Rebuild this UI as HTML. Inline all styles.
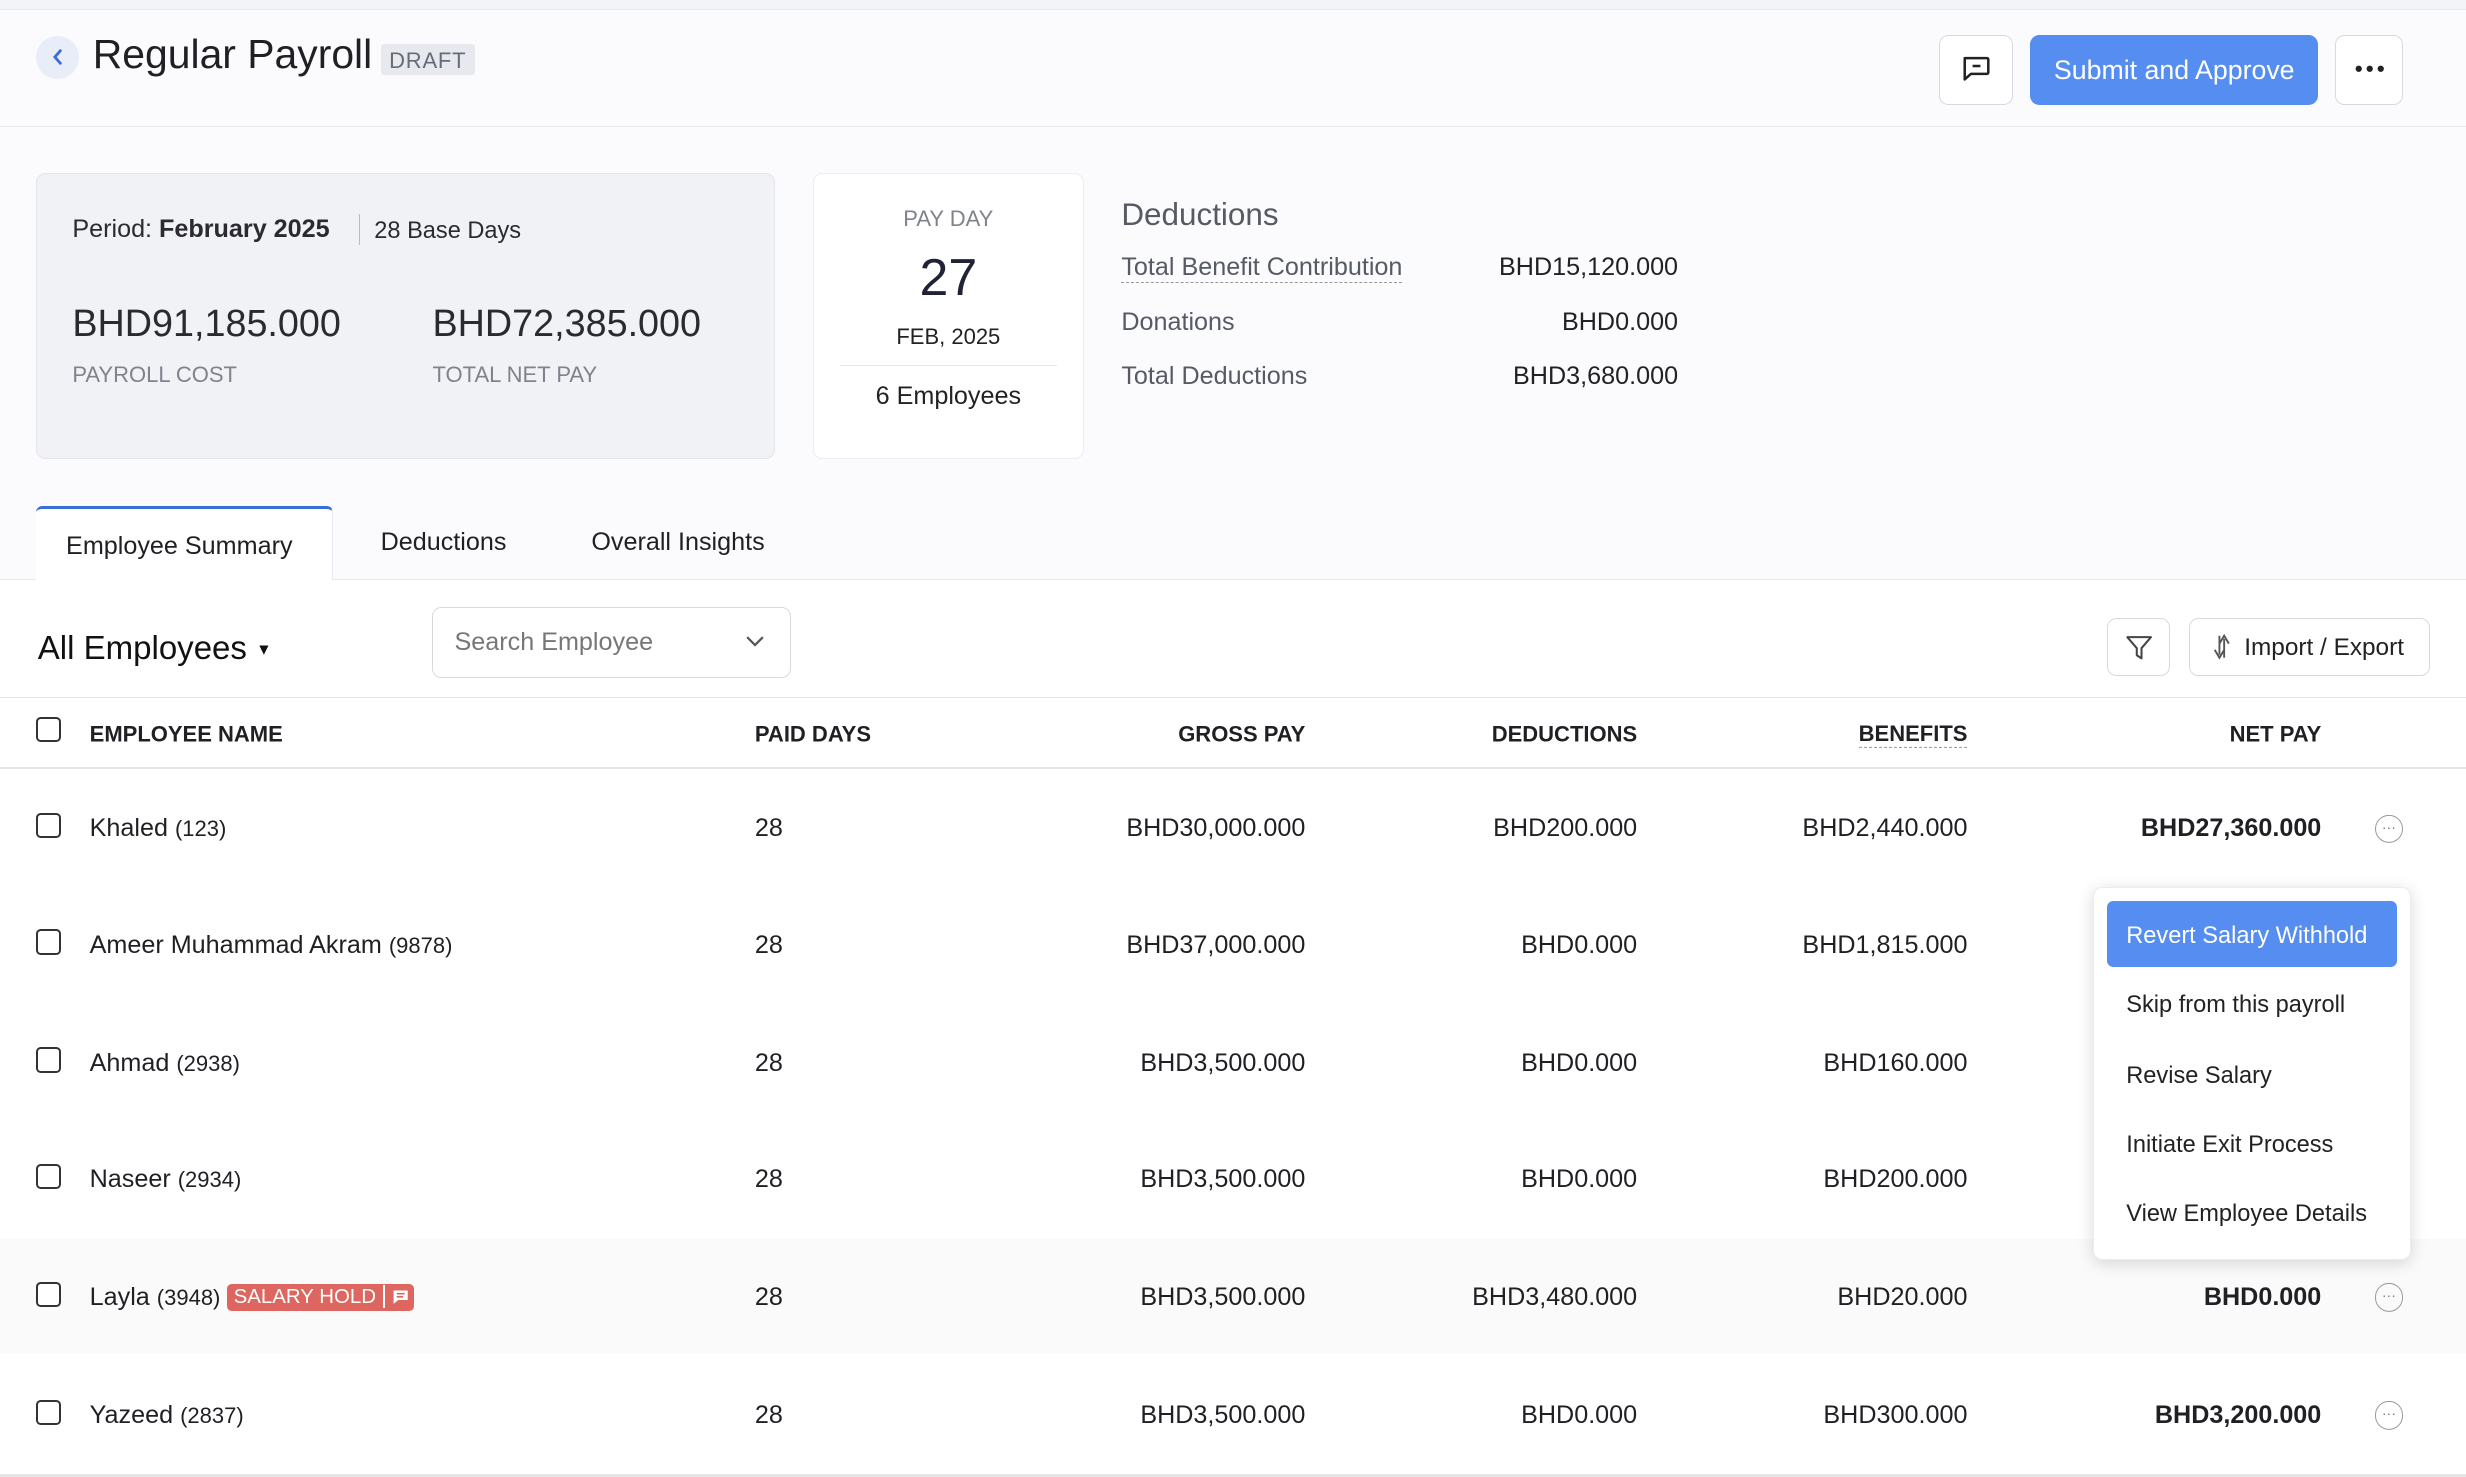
<!DOCTYPE html>
<html><head><meta charset="utf-8"><style>
html,body{margin:0;padding:0;background:#fff;}
body{width:1568px;height:939px;zoom:1.5727;position:relative;overflow:hidden;font-family:"Liberation Sans",Arial,sans-serif;color:#1f1f24;}
.a{position:absolute;white-space:nowrap;}
.r{text-align:right;}
.btn{position:absolute;border:1px solid #d8d9de;border-radius:6px;background:#fff;box-sizing:border-box;}
.cb{position:absolute;left:23px;width:16px;height:16px;border:1.3px solid #333;border-radius:3px;box-sizing:border-box;background:#fff;}
.cell{position:absolute;font-size:16px;transform:translateY(-45%);white-space:nowrap;}
.dot{position:absolute;left:1510px;width:18px;height:18px;border:1px solid #999;border-radius:50%;box-sizing:border-box;transform:translateY(-50%);font-size:9px;color:#777;text-align:center;line-height:14px;}
</style></head><body>
<div class="a" style="left:0;top:0;width:1568px;height:6px;background:#f3f4f8;border-bottom:1px solid #e8e9ee"></div>
<div class="a" style="left:0;top:7px;width:1568px;height:361px;background:#fbfbfe"></div>
<div class="a" style="left:0;top:80px;width:1568px;height:1px;background:#e8e9ee"></div>
<div class="a" style="left:23px;top:23px;width:27px;height:27px;border-radius:50%;background:#e8edf8"></div>
<svg class="a" style="left:30px;top:29px" width="14" height="14" viewBox="0 0 14 14"><path d="M8.5 3 L5 7 L8.5 11" stroke="#3a6fd8" stroke-width="1.8" fill="none" stroke-linecap="round"/></svg>
<div class="a" style="left:59px;top:20px;font-size:26px;color:#1f1f24">Regular Payroll</div>
<div class="a" style="left:242px;top:28px;width:60px;height:20px;background:#e8e9ee;border-radius:2px;font-size:14px;color:#666d78;text-align:center;line-height:21px;letter-spacing:0.5px">DRAFT</div>
<div class="btn" style="left:1233px;top:22px;width:47px;height:45px"></div>
<svg class="a" style="left:1246px;top:35px" width="20" height="18" viewBox="0 0 20 18"><path d="M3 2 H17 Q18 2 18 3 V11 Q18 12 17 12 H7 L3 15.5 V3 Q3 2 4 2 Z" fill="none" stroke="#222" stroke-width="1.6" stroke-linejoin="round"/><path d="M8 7 H13" stroke="#222" stroke-width="1.6"/></svg>
<div class="a" style="left:1291px;top:22px;width:183px;height:45px;background:#558df0;border-radius:6px;color:#fff;font-size:17px;text-align:center;line-height:45px">Submit and Approve</div>
<div class="btn" style="left:1485px;top:22px;width:43px;height:45px"></div>
<svg class="a" style="left:1497px;top:41px" width="20" height="6"><circle cx="3" cy="3" r="2" fill="#222"/><circle cx="10" cy="3" r="2" fill="#222"/><circle cx="17" cy="3" r="2" fill="#222"/></svg>

<div class="a" style="left:23px;top:110px;width:470px;height:182px;background:#f1f2f6;border:1px solid #e4e5ea;border-radius:6px;box-sizing:border-box"></div>
<div class="a" style="left:46px;top:137px;font-size:16px;color:#2a2a30">Period: <span style="font-weight:bold;color:#2a2a30">February 2025</span></div>
<div class="a" style="left:228px;top:136px;width:1px;height:20px;background:#bbb"></div>
<div class="a" style="left:238px;top:138px;font-size:15px;color:#2a2a30">28 Base Days</div>
<div class="a" style="left:46px;top:192px;font-size:24px;color:#2a2a30">BHD91,185.000</div>
<div class="a" style="left:275px;top:192px;font-size:24px;color:#2a2a30">BHD72,385.000</div>
<div class="a" style="left:46px;top:230px;font-size:14px;color:#80838c">PAYROLL COST</div>
<div class="a" style="left:275px;top:230px;font-size:14px;color:#80838c">TOTAL NET PAY</div>

<div class="a" style="left:517px;top:110px;width:172px;height:182px;background:#fff;border:1px solid #ebecef;border-radius:6px;box-sizing:border-box"></div>
<div class="a" style="left:517px;width:172px;top:131px;text-align:center;font-size:14px;color:#80838c">PAY DAY</div>
<div class="a" style="left:517px;width:172px;top:157px;text-align:center;font-size:33px;color:#202336">27</div>
<div class="a" style="left:517px;width:172px;top:206px;text-align:center;font-size:14px;color:#222">FEB, 2025</div>
<div class="a" style="left:534px;top:232px;width:138px;height:1px;background:#e6e6e6"></div>
<div class="a" style="left:517px;width:172px;top:243px;text-align:center;font-size:16px;color:#222">6 Employees</div>

<div class="a" style="left:713px;top:125px;font-size:20px;color:#555a64">Deductions</div>
<div class="a" style="left:713px;top:161px;font-size:16px;color:#555a64;border-bottom:1px dashed #999">Total Benefit Contribution</div>
<div class="a" style="left:713px;top:196px;font-size:16px;color:#555a64">Donations</div>
<div class="a" style="left:713px;top:230px;font-size:16px;color:#555a64">Total Deductions</div>
<div class="a r" style="left:900px;width:167px;top:161px;font-size:16px;color:#222">BHD15,120.000</div>
<div class="a r" style="left:900px;width:167px;top:196px;font-size:16px;color:#222">BHD0.000</div>
<div class="a r" style="left:900px;width:167px;top:230px;font-size:16px;color:#222">BHD3,680.000</div>

<div class="a" style="left:0;top:368px;width:1568px;height:1px;background:#e8e9ee"></div>
<div class="a" style="left:23px;top:322px;width:189px;height:47px;background:#fff;border-top:2px solid #3a6fd8;border-right:1px solid #e8e9ee;box-sizing:border-box;border-radius:4px 4px 0 0"></div>
<div class="a" style="left:42px;top:338px;font-size:16px;color:#1f1f24">Employee Summary</div>
<div class="a" style="left:242px;top:336px;font-size:16px;color:#1f1f24">Deductions</div>
<div class="a" style="left:376px;top:336px;font-size:16px;color:#1f1f24">Overall Insights</div>

<div class="a" style="left:24px;top:400px;font-size:21px;color:#111">All Employees <span style="font-size:10px;vertical-align:3px">▼</span></div>
<div class="btn" style="left:275px;top:386px;width:228px;height:45px"></div>
<div class="a" style="left:289px;top:399px;font-size:16px;color:#777">Search Employee</div>
<svg class="a" style="left:473px;top:403px" width="14" height="10"><path d="M2 2 L7 7 L12 2" stroke="#555" stroke-width="1.4" fill="none"/></svg>
<div class="btn" style="left:1340px;top:393px;width:40px;height:37px"></div>
<svg class="a" style="left:1351px;top:403px" width="18" height="17" viewBox="0 0 18 17"><path d="M1.5 2 H16.5 L10.5 9 V15.5 L7.5 13.5 V9 Z" fill="none" stroke="#444" stroke-width="1.3" stroke-linejoin="round"/></svg>
<div class="btn" style="left:1392px;top:393px;width:153px;height:37px"></div>
<svg class="a" style="left:1405px;top:401px" width="16" height="20" viewBox="0 0 16 20"><path d="M9 17 V5 M6 8 L9 3 L12 8 M6 3 V15 M3 12 L6 17 L9 12" fill="none" stroke="#555" stroke-width="1.2"/></svg>
<div class="a" style="left:1427px;top:403px;font-size:15.5px;color:#222">Import / Export</div>

<div class="a" style="left:0;top:443px;width:1568px;height:1px;background:#e6e6e9"></div>
<div class="a" style="left:0;top:488px;width:1568px;height:1px;background:#e6e6e9"></div>
<div class="cb" style="top:456px"></div>
<div class="cell" style="left:57px;top:466px;font-size:14px;font-weight:bold">EMPLOYEE NAME</div>
<div class="cell" style="left:480px;top:466px;font-size:14px;font-weight:bold">PAID DAYS</div>
<div class="cell r" style="right:738px;top:466px;font-size:14px;font-weight:bold">GROSS PAY</div>
<div class="cell r" style="right:527px;top:466px;font-size:14px;font-weight:bold">DEDUCTIONS</div>
<div class="cell r" style="right:317px;top:466px;font-size:14px;font-weight:bold;border-bottom:1px dashed #999">BENEFITS</div>
<div class="cell r" style="right:92px;top:466px;font-size:14px;font-weight:bold">NET PAY</div>

<div class="a" style="left:0;top:788px;width:1568px;height:73px;background:#fafafa"></div>
<div class="a" style="left:0;top:937px;width:1568px;height:2px;background:#e4e4e4"></div>

<div class="cb" style="top:517px"></div><div class="cell" style="left:57px;top:526px">Khaled <span style="font-size:14px">(123)</span></div><div class="cell" style="left:480px;top:526px">28</div><div class="cell" style="right:738px;top:526px">BHD30,000.000</div><div class="cell" style="right:527px;top:526px">BHD200.000</div><div class="cell" style="right:317px;top:526px">BHD2,440.000</div><div class="cell" style="right:92px;top:526px;font-weight:bold">BHD27,360.000</div><div class="dot" style="top:527px">···</div>
<div class="cb" style="top:591px"></div><div class="cell" style="left:57px;top:600px">Ameer Muhammad Akram <span style="font-size:14px">(9878)</span></div><div class="cell" style="left:480px;top:600px">28</div><div class="cell" style="right:738px;top:600px">BHD37,000.000</div><div class="cell" style="right:527px;top:600px">BHD0.000</div><div class="cell" style="right:317px;top:600px">BHD1,815.000</div>
<div class="cb" style="top:666px"></div><div class="cell" style="left:57px;top:675px">Ahmad <span style="font-size:14px">(2938)</span></div><div class="cell" style="left:480px;top:675px">28</div><div class="cell" style="right:738px;top:675px">BHD3,500.000</div><div class="cell" style="right:527px;top:675px">BHD0.000</div><div class="cell" style="right:317px;top:675px">BHD160.000</div>
<div class="cb" style="top:740px"></div><div class="cell" style="left:57px;top:749px">Naseer <span style="font-size:14px">(2934)</span></div><div class="cell" style="left:480px;top:749px">28</div><div class="cell" style="right:738px;top:749px">BHD3,500.000</div><div class="cell" style="right:527px;top:749px">BHD0.000</div><div class="cell" style="right:317px;top:749px">BHD200.000</div>
<div class="cb" style="top:815px"></div><div class="cell" style="left:57px;top:824px">Layla <span style="font-size:14px">(3948)</span> <span style="display:inline-block;background:#dd6660;color:#fff;font-size:13px;border-radius:3px;padding:1px 3px 1px 4px;vertical-align:1px">SALARY HOLD <span style="border-left:1.5px solid #fff;margin-left:1px;padding-left:4px"><svg width="11" height="10" viewBox="0 0 11 10" style="vertical-align:-1px"><path d="M1 1 H10 V7 H4 L1 9.5 Z" fill="#fff"/><path d="M3 3 H8 M3 5 H7" stroke="#dd6660" stroke-width="1"/></svg></span></span></div><div class="cell" style="left:480px;top:824px">28</div><div class="cell" style="right:738px;top:824px">BHD3,500.000</div><div class="cell" style="right:527px;top:824px">BHD3,480.000</div><div class="cell" style="right:317px;top:824px">BHD20.000</div><div class="cell" style="right:92px;top:824px;font-weight:bold">BHD0.000</div><div class="dot" style="top:825px">···</div>
<div class="cb" style="top:890px"></div><div class="cell" style="left:57px;top:899px">Yazeed <span style="font-size:14px">(2837)</span></div><div class="cell" style="left:480px;top:899px">28</div><div class="cell" style="right:738px;top:899px">BHD3,500.000</div><div class="cell" style="right:527px;top:899px">BHD0.000</div><div class="cell" style="right:317px;top:899px">BHD300.000</div><div class="cell" style="right:92px;top:899px;font-weight:bold">BHD3,200.000</div><div class="dot" style="top:900px">···</div>

<div class="a" style="left:1331px;top:564px;width:202px;height:237px;background:#fff;border-radius:6px;box-shadow:0 2px 10px rgba(0,0,0,0.15);border:1px solid #ececec;box-sizing:border-box"></div>
<div class="a" style="left:1340px;top:573px;width:184px;height:42px;background:#558df0;border-radius:4px"></div>
<div class="a" style="left:1352px;top:586px;font-size:15px;color:#fff">Revert Salary Withhold</div>
<div class="a" style="left:1352px;top:630px;font-size:15px;color:#222">Skip from this payroll</div>
<div class="a" style="left:1352px;top:675px;font-size:15px;color:#222">Revise Salary</div>
<div class="a" style="left:1352px;top:719px;font-size:15px;color:#222">Initiate Exit Process</div>
<div class="a" style="left:1352px;top:763px;font-size:15px;color:#222">View Employee Details</div>
</body></html>
